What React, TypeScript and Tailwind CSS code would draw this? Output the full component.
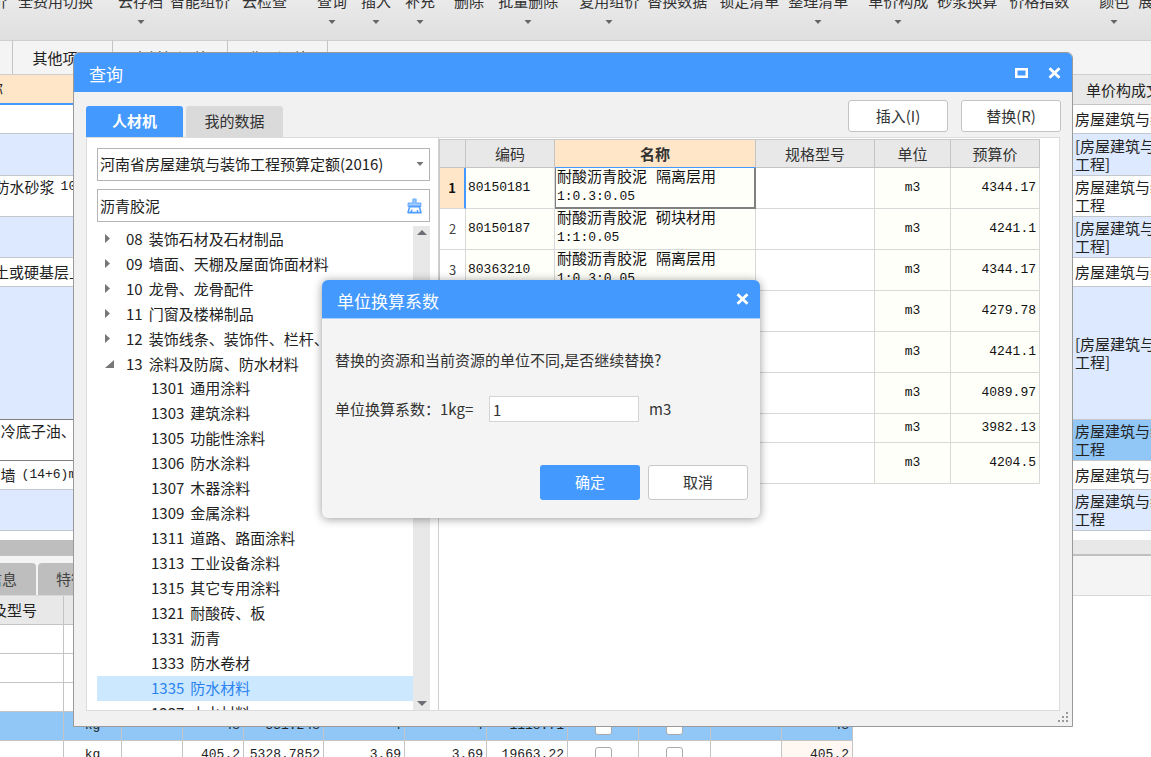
import React from "react";

const UI = "font-['Noto_Sans_CJK_SC',sans-serif]";
const MONO = "font-['Liberation_Mono','Noto_Sans_CJK_SC',monospace] text-[13px]";

function ArrowDown({ className = "" }: { className?: string }) {
  return (
    <svg viewBox="0 0 8 4" className={className} aria-hidden="true">
      <path d="M0.5 0h7L4 4z" fill="currentColor" />
    </svg>
  );
}

function CloseIcon() {
  return (
    <svg viewBox="0 0 13 12" className="h-3 w-[13px]" aria-hidden="true">
      <path d="M1.5 1.2l10 9.6M11.5 1.2l-10 9.6" stroke="#fff" strokeWidth="2.8" />
    </svg>
  );
}

/* ---------- application behind the dialogs ---------- */

const tools: { label: string; gap: string; menu?: boolean }[] = [
  { label: "全费用切换", gap: "ml-[11px]" },
  { label: "云存档", gap: "ml-[25px]", menu: true },
  { label: "智能组价", gap: "ml-[7px]" },
  { label: "云检查", gap: "ml-[12px]" },
  { label: "查询", gap: "ml-[30px]", menu: true },
  { label: "插入", gap: "ml-[14px]", menu: true },
  { label: "补充", gap: "ml-[14px]", menu: true },
  { label: "删除", gap: "ml-[19px]" },
  { label: "批量删除", gap: "ml-[14px]", menu: true },
  { label: "复用组价", gap: "ml-[21px]", menu: true },
  { label: "替换数据", gap: "ml-[8px]" },
  { label: "锁定清单", gap: "ml-[12px]" },
  { label: "整理清单", gap: "ml-[9px]", menu: true },
  { label: "单价构成", gap: "ml-[20px]", menu: true },
  { label: "砂浆换算", gap: "ml-[9px]" },
  { label: "价格指数", gap: "ml-[12px]" },
  { label: "颜色", gap: "ml-[30px]", menu: true },
  { label: "展开", gap: "ml-[9px]" },
];

function Toolbar() {
  return (
    <div className="flex h-10 shrink-0 items-end overflow-hidden bg-linear-to-b from-[#eaeaea] to-[#dfdfdf] pb-4 text-[15px] leading-[18px] whitespace-nowrap text-[#333]">
      <div className="flex h-8 w-[7px] shrink-0 justify-end overflow-hidden">组价</div>
      {tools.map((t) => (
        <button key={t.label} type="button" className={`flex h-8 shrink-0 flex-col items-center justify-between ${t.gap}`}>
          <span>{t.label}</span>
          {t.menu && <ArrowDown className="h-1 w-2 text-[#666]" />}
        </button>
      ))}
    </div>
  );
}

type BackRow = {
  h: string;
  bg: string;
  rightBg?: string;
  left?: string;
  code?: string;
  leftTwo?: boolean;
  dark?: boolean;
  right: string[];
};

const backRows: BackRow[] = [
  { h: "h-[29px]", bg: "bg-white", right: ["房屋建筑与装饰工程"] },
  { h: "h-[42px]", bg: "bg-[#dce9fe]", right: ["[房屋建筑与装饰", "工程]"] },
  { h: "h-[41px]", bg: "bg-white", left: "防水砂浆", code: "100", leftTwo: true, right: ["房屋建筑与装饰", "工程"] },
  { h: "h-[41px]", bg: "bg-[#dce9fe]", right: ["[房屋建筑与装饰", "工程]"] },
  { h: "h-[29px]", bg: "bg-white", left: "土或硬基层上", right: ["房屋建筑与装饰工程"] },
  { h: "h-[133px]", bg: "bg-[#dce9fe]", dark: true, right: ["[房屋建筑与装饰", "工程]"] },
  { h: "h-[41px]", bg: "bg-white", rightBg: "bg-[#90c7f7]", left: "刷冷底子油、1", leftTwo: true, dark: true, right: ["房屋建筑与装饰", "工程"] },
  { h: "h-[29px]", bg: "bg-white", left: "墙", code: "(14+6)mm", right: ["房屋建筑与装饰工程"] },
  { h: "h-[41px]", bg: "bg-[#dce9fe]", right: ["房屋建筑与装饰", "工程"] },
];

function BackGrid() {
  return (
    <table className="w-full table-fixed border-separate border-spacing-0 text-[15px] leading-[18px] text-[#222]">
      <colgroup>
        <col className="w-[84px]" />
        <col />
        <col className="w-[78px]" />
      </colgroup>
      <thead>
        <tr className="h-[30px]">
          <th className="border-b-2 border-[#4499ff] bg-[#ffe6c8] p-0 text-left font-normal">
            <div className="flex w-[3px] justify-end overflow-hidden whitespace-nowrap">名称</div>
          </th>
          <th className="bg-[#e8e8e8] p-0" />
          <th className="overflow-hidden border-b border-[#c4c4c4] bg-[#e8e8e8] p-0 pl-[13px] text-left font-normal whitespace-nowrap">
            单价构成文件
          </th>
        </tr>
      </thead>
      <tbody>
        {backRows.map((r, i) => (
          <tr key={i} className={`${r.h} ${r.bg}`}>
            <td className={`border-b p-0 ${r.dark ? "border-[#808080]" : "border-[#c4c8cc]"}`}>
              <div className="flex items-center justify-end gap-1.5 overflow-hidden whitespace-nowrap">
                {r.left}
                {r.code && <span className={MONO}>{r.code}</span>}
              </div>
              {r.leftTwo && <div className="h-[18px]" />}
            </td>
            <td className="border-b border-[#c4c8cc] p-0" />
            <td className={`overflow-hidden border-b border-[#c4c8cc] p-0 pl-[2px] whitespace-nowrap ${r.rightBg ?? ""}`}>
              {r.right.map((line) => (
                <div key={line}>{line}</div>
              ))}
            </td>
          </tr>
        ))}
      </tbody>
    </table>
  );
}

type Detail = { unit: string; a: string; b: string; c: string; d: string; e: string; f: string; selected?: boolean; checks?: boolean };

const blank: Detail = { unit: "", a: "", b: "", c: "", d: "", e: "", f: "" };
const details: Detail[] = [
  blank,
  blank,
  blank,
  { unit: "kg", a: "48", b: "551.248", c: "4", d: "4", e: "1118.71", f: "48", selected: true, checks: true },
  { unit: "kg", a: "405.2", b: "5328.7852", c: "3.69", d: "3.69", e: "19663.22", f: "405.2", checks: true },
];

function DetailGrid() {
  const cell = "border-r border-b border-[#c4c4c4] p-0 pr-[3px] text-right";
  const box = "mx-auto block size-[17px] appearance-none rounded-[3px] border border-[#aaa] bg-white";
  return (
    <table className="w-[853px] table-fixed border-separate border-spacing-0 leading-[18px] text-[#222]">
      <colgroup>
        <col className="w-16" />
        <col className="w-[58px]" />
        <col className="w-[61px]" />
        <col className="w-[61px]" />
        <col className="w-[80px]" />
        <col className="w-[81px]" />
        <col className="w-[82px]" />
        <col className="w-[81px]" />
        <col className="w-[71px]" />
        <col className="w-[72px]" />
        <col className="w-[71px]" />
        <col className="w-[71px]" />
      </colgroup>
      <thead>
        <tr className="h-[29px] bg-[#e8e8e8] text-[15px]">
          <th className="border-r border-b border-[#c4c4c4] p-0 font-normal">
            <div className="flex w-[37px] justify-end overflow-hidden whitespace-nowrap">规格及型号</div>
          </th>
          <th colSpan={11} className="border-b border-[#c4c4c4] p-0" />
        </tr>
      </thead>
      <tbody>
        {details.map((d, i) => (
          <tr key={i} className={`h-[29px] ${MONO} ${d.selected ? "bg-[#90c7f7]" : "bg-white"}`}>
            <td className={cell} />
            <td className="border-r border-b border-[#c4c4c4] p-0 text-center">{d.unit}</td>
            <td className={cell} />
            <td className={cell}>{d.a}</td>
            <td className={cell}>{d.b}</td>
            <td className={cell}>{d.c}</td>
            <td className={cell}>{d.d}</td>
            <td className={cell}>{d.e}</td>
            <td className="border-r border-b border-[#c4c4c4] p-0">
              {d.checks && <input type="checkbox" aria-label="选择一" className={box} />}
            </td>
            <td className="border-r border-b border-[#c4c4c4] p-0">
              {d.checks && <input type="checkbox" aria-label="选择二" className={box} />}
            </td>
            <td className={cell} />
            <td className={`${cell} ${d.selected ? "" : "bg-[#fff8f2]"}`}>{d.f}</td>
          </tr>
        ))}
      </tbody>
    </table>
  );
}

function Backdrop() {
  const tab = "flex shrink-0 items-center justify-center border-r border-[#c4c4c4] pt-0.5";
  return (
    <div className="flex h-full flex-col overflow-hidden bg-white">
      <Toolbar />
      <div className="flex h-[35px] shrink-0 border-y border-[#cfcfcf] bg-[#f4f4f4] text-[15px] text-[#222]">
        <div className={`${tab} w-[13px]`} />
        <div className={`${tab} w-[100px]`}>其他项目</div>
        <div className={`${tab} w-[115px]`}>人材机汇总</div>
        <div className={`${tab} w-[100px]`}>费用汇总</div>
      </div>
      <BackGrid />
      <div className="mt-[9px] flex h-4 shrink-0 justify-between border-b-2 border-[#c0c0c0] bg-[#e8e8e8]">
        <div className="w-1/2 bg-[#bebebe]" />
      </div>
      <div className="flex h-10 shrink-0 items-end border-b border-[#d8d8d8] bg-[#f4f4f4] text-[15px] leading-[18px] text-[#444]">
        <div className="flex h-8 w-9 items-center justify-end rounded-tr-sm bg-[#bebebe] pr-[19px] whitespace-nowrap">工料机信息</div>
        <div className="ml-[2px] flex h-8 w-[110px] items-center rounded-tl-sm bg-[#bebebe] pl-[18px]">特征及内容</div>
      </div>
      <DetailGrid />
    </div>
  );
}

/* ---------- query dialog ---------- */

const groups = [
  ["08", "装饰石材及石材制品"],
  ["09", "墙面、天棚及屋面饰面材料"],
  ["10", "龙骨、龙骨配件"],
  ["11", "门窗及楼梯制品"],
  ["12", "装饰线条、装饰件、栏杆、扶手"],
];
const leaves = [
  ["1301", "通用涂料"],
  ["1303", "建筑涂料"],
  ["1305", "功能性涂料"],
  ["1306", "防水涂料"],
  ["1307", "木器涂料"],
  ["1309", "金属涂料"],
  ["1311", "道路、路面涂料"],
  ["1313", "工业设备涂料"],
  ["1315", "其它专用涂料"],
  ["1321", "耐酸砖、板"],
  ["1331", "沥青"],
  ["1333", "防水卷材"],
  ["1335", "防水材料"],
  ["1337", "止水材料"],
];

function TreeLabel({ code, name }: { code: string; name: string }) {
  return (
    <span className="flex gap-1.5">
      <span>{code}</span>
      <span>{name}</span>
    </span>
  );
}

function Tree() {
  return (
    <div className="flex min-h-0 flex-1">
      <ul className="min-w-0 flex-1 overflow-hidden text-[15px] leading-[24px] whitespace-nowrap text-[#222]">
        {groups.map(([code, name]) => (
          <li key={code} className="flex h-[25px] items-center">
            <button type="button" aria-label="展开" className="flex w-[29px] shrink-0 pl-2">
              <svg viewBox="0 0 5 9" className="h-[9px] w-[5px]" aria-hidden="true">
                <path d="M0 0v9l5-4.5z" fill="#777" />
              </svg>
            </button>
            <TreeLabel code={code} name={name} />
          </li>
        ))}
        <li>
          <div className="flex h-[25px] items-center">
            <button type="button" aria-label="收起" className="flex w-[29px] shrink-0 pl-2">
              <svg viewBox="0 0 9 8" className="h-2 w-[9px]" aria-hidden="true">
                <path d="M9 0v8H0z" fill="#777" />
              </svg>
            </button>
            <TreeLabel code="13" name="涂料及防腐、防水材料" />
          </div>
          <ul>
            {leaves.map(([code, name]) => (
              <li key={code} className={code === "1335" ? "h-[25px] bg-[#cce8ff] pl-[54px] text-[#2b83f0]" : "h-[25px] pl-[54px]"}>
                <TreeLabel code={code} name={name} />
              </li>
            ))}
          </ul>
        </li>
      </ul>
      <div className="flex w-[17px] flex-col items-center justify-between bg-[#e8e8e8] py-1">
        <svg viewBox="0 0 10 5" className="h-[5px] w-2.5" aria-hidden="true">
          <path d="M0 5h10L5 0z" fill="#6d6d75" />
        </svg>
        <svg viewBox="0 0 10 5" className="h-[5px] w-2.5" aria-hidden="true">
          <path d="M0 0h10L5 5z" fill="#6d6d75" />
        </svg>
      </div>
    </div>
  );
}

const materials: { code?: string; name?: string[]; price: string; short?: boolean }[] = [
  { code: "80150181", name: ["耐酸沥青胶泥 隔离层用", "1:0.3:0.05"], price: "4344.17" },
  { code: "80150187", name: ["耐酸沥青胶泥 砌块材用", "1:1:0.05"], price: "4241.1" },
  { code: "80363210", name: ["耐酸沥青胶泥 隔离层用", "1:0.3:0.05"], price: "4344.17" },
  { price: "4279.78" },
  { price: "4241.1" },
  { price: "4089.97" },
  { price: "3982.13", short: true },
  { price: "4204.5" },
];

function MaterialTable() {
  const head = "border-r border-b border-[#c4c4c4] p-0 font-normal";
  const cell = "border-r border-b border-[#d8d8d8] p-0";
  return (
    <table className="w-full max-w-[601px] table-fixed border-separate border-spacing-0 border-t border-l border-[#c8c8c8] text-[#111]">
      <colgroup>
        <col className="w-[26px]" />
        <col className="w-[89px]" />
        <col className="w-[201px]" />
        <col className="w-[119px]" />
        <col className="w-[76px]" />
        <col className="w-[89px]" />
      </colgroup>
      <thead>
        <tr className="h-[28px] bg-[#e8e8e8] text-[15px] leading-[18px] text-[#333]">
          <th className={head} />
          <th className={head}>编码</th>
          <th className="border-r border-b border-[#c4c4c4] border-b-[#4499ff] bg-[#ffe6c8] p-0 font-bold">名称</th>
          <th className={head}>规格型号</th>
          <th className={head}>单位</th>
          <th className={head}>预算价</th>
        </tr>
      </thead>
      <tbody>
        {materials.map((m, i) => (
          <tr key={i} className={`${m.short ? "h-[29px]" : "h-[41px]"} ${MONO} leading-[18px]`}>
            <td
              className={
                i === 0
                  ? "border-r-2 border-b border-r-[#4499ff] border-b-[#d8d8d8] bg-[#ffe6c8] p-0 text-center font-['Noto_Sans_CJK_SC',sans-serif] font-bold"
                  : "border-r border-b border-[#d8d8d8] p-0 text-center font-['Noto_Sans_CJK_SC',sans-serif] text-[#444]"
              }
            >
              {i + 1}
            </td>
            <td className={`${cell} bg-[#fffffa] pl-[2px]`}>{m.code}</td>
            <td
              className={
                i === 0
                  ? "overflow-hidden border-r-2 border-b-2 border-l border-[#808080] bg-[#fffffa] p-0 pl-px whitespace-nowrap"
                  : `${cell} overflow-hidden bg-[#fffffa] pl-[2px] whitespace-nowrap`
              }
            >
              {m.name && (
                <>
                  <div className="text-[15px]">{m.name[0]}</div>
                  <div>{m.name[1]}</div>
                </>
              )}
            </td>
            <td className={cell} />
            <td className={`${cell} bg-[#fffffa] text-center`}>m3</td>
            <td className={`${cell} bg-[#fffffa] pr-[3px] text-right`}>{m.price}</td>
          </tr>
        ))}
      </tbody>
    </table>
  );
}

function QueryDialog() {
  const button = "h-8 w-[100px] rounded-[3px] border border-[#c4c4c4] bg-white";
  return (
    <section
      role="dialog"
      aria-label="查询"
      className="absolute top-[52px] right-[78px] bottom-[30px] left-[73px] flex flex-col overflow-hidden rounded-t-md border border-[#9a9a9a] bg-[#f1f1f1]"
    >
      <header className="flex h-[39px] shrink-0 items-center bg-[#4499ff] pr-[11px] pl-[15px] text-white">
        <h1 className="flex-1 pt-0.5 text-[17px]">查询</h1>
        <button type="button" aria-label="最大化" className="mr-5">
          <svg viewBox="0 0 13 10" className="h-2.5 w-[13px]" aria-hidden="true">
            <rect x="1.25" y="1.25" width="10.5" height="7.5" fill="none" stroke="#fff" strokeWidth="2.5" />
          </svg>
        </button>
        <button type="button" aria-label="关闭">
          <CloseIcon />
        </button>
      </header>
      <div className="flex h-[45px] shrink-0 items-end pr-[11px] pl-3 text-[15px] text-[#333]">
        <button type="button" className="h-[31px] w-[97px] rounded-t-[3px] bg-[#4499ff] font-bold text-white">
          人材机
        </button>
        <button type="button" className="ml-[3px] h-[31px] w-[97px] rounded-t-[3px] bg-[#dadada]">
          我的数据
        </button>
        <div className="mb-[5px] ml-auto flex gap-[13px]">
          <button type="button" className={button}>
            插入(I)
          </button>
          <button type="button" className={button}>
            替换(R)
          </button>
        </div>
      </div>
      <div className="mx-3 flex min-h-0 flex-1 border border-[#dcdcdc] bg-white">
        <div className="flex w-[352px] shrink-0 flex-col border-r border-[#d0d0d0] pt-2.5 pr-2 pl-[10px]">
          <div className="relative">
            <select
              aria-label="定额"
              className="block h-[33px] w-full appearance-none border border-[#b4b4b4] bg-white pl-[2px] text-[15px] text-[#222]"
            >
              <option>河南省房屋建筑与装饰工程预算定额(2016)</option>
            </select>
            <ArrowDown className="pointer-events-none absolute top-[14px] right-[6px] h-1 w-2 text-[#777]" />
          </div>
          <div className="mt-2 flex h-[33px] shrink-0 items-center border border-[#b4b4b4] bg-white pr-[7px]">
            <input aria-label="关键字" defaultValue="沥青胶泥" className="h-full min-w-0 flex-1 pl-[2px] text-[15px] text-[#222] outline-none" />
            <button type="button" aria-label="清空">
              <svg viewBox="0 0 15 16" className="h-4 w-[15px]" fill="none" aria-hidden="true">
                <path d="M6 1h3v4h4.800v3.400H1.200V5H6z" fill="#9cc8ff" stroke="#6aacff" strokeWidth="1.2" strokeLinejoin="round" />
                <path d="M2.600 8.600h9.800l1.600 6H1z" fill="#fff" stroke="#4f9dff" strokeWidth="1.600" strokeLinejoin="round" />
                <path d="M3 14.600c1.200-.7 1.800-1.800 2-3M10.500 12v2.600" stroke="#4f9dff" strokeWidth="1.400" />
              </svg>
            </button>
          </div>
          <div className="mt-1 flex min-h-0 flex-1">
            <Tree />
          </div>
        </div>
        <div className="min-w-0 flex-1 pt-px">
          <MaterialTable />
        </div>
      </div>
      <footer className="flex h-[15px] shrink-0 items-end justify-end pr-[3px] pb-[3px]">
        <svg viewBox="0 0 11 11" className="h-[11px] w-[11px]" fill="#9a9a9a" aria-hidden="true">
          <path d="M8 0h2v2H8zM8 4h2v2H8zM4 4h2v2H4zM8 8h2v2H8zM4 8h2v2H4zM0 8h2v2H0z" />
        </svg>
      </footer>
    </section>
  );
}

/* ---------- conversion factor dialog ---------- */

function FactorDialog() {
  return (
    <section
      role="dialog"
      aria-label="单位换算系数"
      className="absolute top-[280px] left-[322px] w-[438px] overflow-hidden rounded-md bg-[#f4f4f4] text-[15px] text-[#333] shadow-[0_1px_10px_rgba(0,0,0,0.4)]"
    >
      <header className="flex h-[39px] items-center border-b border-[#a9d0ff] bg-[#4499ff] pr-[11px] pl-[15px] text-white">
        <h2 className="flex-1 pt-1 text-[17px]">单位换算系数</h2>
        <button type="button" aria-label="关闭">
          <CloseIcon />
        </button>
      </header>
      <div className="px-3 pt-[30px] pb-[18px]">
        <p className="pl-px leading-[22px]">替换的资源和当前资源的单位不同,是否继续替换?</p>
        <div className="mt-[25px] flex h-[26px] items-center pl-px">
          <label htmlFor="factor" className="w-[154px] whitespace-nowrap">
            单位换算系数：1kg=
          </label>
          <input id="factor" defaultValue="1" className="h-[26px] w-[150px] border border-[#d4d4d4] bg-white pl-[3px] outline-none" />
          <span className="ml-[10px]">m3</span>
        </div>
        <div className="mt-[43px] flex justify-end gap-2">
          <button type="button" className="h-[35px] w-[100px] rounded-[3px] bg-[#4499ff] text-white">
            确定
          </button>
          <button type="button" className="h-[35px] w-[100px] rounded-[3px] border border-[#c8c8c8] bg-white">
            取消
          </button>
        </div>
      </div>
    </section>
  );
}

export default function App() {
  return (
    <main className={`relative h-screen overflow-hidden ${UI}`}>
      <Backdrop />
      <QueryDialog />
      <FactorDialog />
    </main>
  );
}
